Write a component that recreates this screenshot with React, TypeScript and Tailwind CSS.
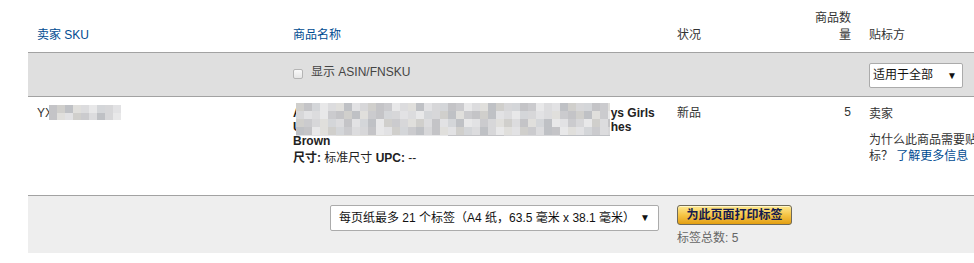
import React from "react";

const mosaicShades = [
  "bg-[#d7d7d9]",
  "bg-[#cbcbce]",
  "bg-[#e2e2e4]",
  "bg-[#c4c4c7]",
  "bg-[#dcdcde]",
  "bg-[#d0cfcc]",
  "bg-[#e8e8e9]",
  "bg-[#bfc1c5]",
  "bg-[#d4d6d9]",
  "bg-[#e0dfdc]",
];

// pixelated blur over the hidden seller data
const Mosaic: React.FC<{ cols: number; rows: number; seed: number }> = ({
  cols,
  rows,
  seed,
}) => {
  const cells = [];
  for (let r = 0; r < rows; r++) {
    for (let c = 0; c < cols; c++) {
      const idx = (r * 17 + c * 11 + (((r + 1) * (c + 3) * seed) % 7)) % mosaicShades.length;
      cells.push(
        <span key={`${r}-${c}`} className={`block h-[8px] w-[8px] ${mosaicShades[idx]}`} />
      );
    }
  }
  return (
    <div className="flex flex-wrap" style={{ width: cols * 8 }}>
      {cells}
    </div>
  );
};

const App: React.FC = () => {
  return (
    <div
      className="w-[974px] h-[263px] overflow-hidden bg-white text-[12px] text-[#333]"
      style={{ fontFamily: '"Liberation Sans", Arial, "Noto Sans CJK SC", sans-serif' }}
    >
      <table className="ml-[28px] w-[972px] table-fixed border-collapse">
        <colgroup>
          <col className="w-[256px]" />
          <col className="w-[384px]" />
          <col className="w-[138px]" />
          <col className="w-[54px]" />
          <col className="w-[140px]" />
        </colgroup>
        <thead>
          <tr className="h-[52px] border-b border-[#a2a2a2]">
            <th className="align-bottom px-[9px] pb-[8px] text-left font-normal leading-[17px] text-[#004b91]">
              卖家 SKU
            </th>
            <th className="align-bottom px-[9px] pb-[8px] text-left font-normal leading-[17px] text-[#004b91]">
              商品名称
            </th>
            <th className="align-bottom px-[9px] pb-[8px] text-left font-normal leading-[17px]">
              状况
            </th>
            <th className="align-bottom px-[9px] pb-[8px] text-right font-normal leading-[17px]">
              商品数量
            </th>
            <th className="align-bottom px-[9px] pb-[8px] text-left font-normal leading-[17px]">
              贴标方
            </th>
          </tr>
        </thead>
        <tbody>
          <tr className="h-[44px] bg-[#dfdfdf] border-b border-[#a2a2a2]">
            <td />
            <td className="px-[9px]">
              <label className="flex items-center gap-[8px] text-[#444]">
                <span className="block h-[10px] w-[10px] rounded-[2px] border border-[#b5b5b5] bg-gradient-to-b from-[#fafafa] to-[#e6e6e6]" />
                <span className="leading-[16px] -mt-[5px]">显示 ASIN/FNSKU</span>
              </label>
            </td>
            <td />
            <td />
            <td className="px-[9px]">
              <div className="mt-[2px] flex h-[25px] w-[94px] items-center justify-between rounded-[2px] border border-[#ababab] bg-white pl-[3px] pr-[5px] text-[#111]">
                <span>适用于全部</span>
                <span className="text-[10px]">▼</span>
              </div>
            </td>
          </tr>
          <tr className="h-[99px] border-b border-[#a2a2a2]">
            <td className="align-top px-[9px] pt-[9px]">
              <div className="flex items-start leading-[14px]">
                <span>YX</span>
                <div className="-ml-[4px] -mt-[1px] h-[15px] overflow-hidden">
                  <Mosaic cols={9} rows={2} seed={1} />
                </div>
              </div>
            </td>
            <td className="align-top px-[9px] pt-[9px]">
              <div className="relative font-bold leading-[14px] text-[#222]">
                <div className="flex">
                  <span>A</span>
                  <span className="w-[309px]" />
                  <span>ys Girls</span>
                </div>
                <div className="flex">
                  <span>U</span>
                  <span className="w-[309px]" />
                  <span>hes</span>
                </div>
                <div>Brown</div>
                <div className="absolute left-[3px] -top-[3px] h-[33px] w-[314px] overflow-hidden">
                  <Mosaic cols={40} rows={5} seed={4} />
                </div>
              </div>
              <div className="mt-[2px] leading-[16px] text-[#222]">
                <span className="font-bold">尺寸:</span> 标准尺寸 <span className="font-bold">UPC:</span> --
              </div>
            </td>
            <td className="align-top px-[9px] pt-[9px] leading-[14px]">新品</td>
            <td className="align-top px-[9px] pt-[8px] text-right leading-[14px]">5</td>
            <td className="align-top px-[9px] pt-[10px]">
              <div className="leading-[14px]">卖家</div>
              <div className="mt-[11px] leading-[16px]">
                为什么此商品需要贴标？{" "}
                <span className="text-[#004b91]">了解更多信息</span>
              </div>
            </td>
          </tr>
          <tr className="h-[58px] bg-[#eeeeee]">
            <td colSpan={2} className="align-top px-[9px] pt-[9px]">
              <div className="ml-auto flex h-[26px] w-[329px] items-center justify-between rounded-[2px] border border-[#ababab] bg-white pl-[8px] pr-[8px] text-[#111]">
                <span>每页纸最多 21 个标签（A4 纸，63.5 毫米 x 38.1 毫米）</span>
                <span className="text-[10px]">▼</span>
              </div>
            </td>
            <td colSpan={3} className="align-top px-[9px] pt-[9px]">
              <button className="flex h-[20px] w-[115px] items-center justify-center rounded-[3px] border border-[#6f6a5a] bg-gradient-to-b from-[#fde88e] via-[#f6c545] to-[#e39f0c] font-bold text-[#141a4d] shadow-[inset_0_1px_0_#fff6c8]">
                为此页面打印标签
              </button>
              <div className="mt-[6px] leading-[14px] text-[#666]">标签总数: 5</div>
            </td>
          </tr>
        </tbody>
      </table>
    </div>
  );
};

export default App;
